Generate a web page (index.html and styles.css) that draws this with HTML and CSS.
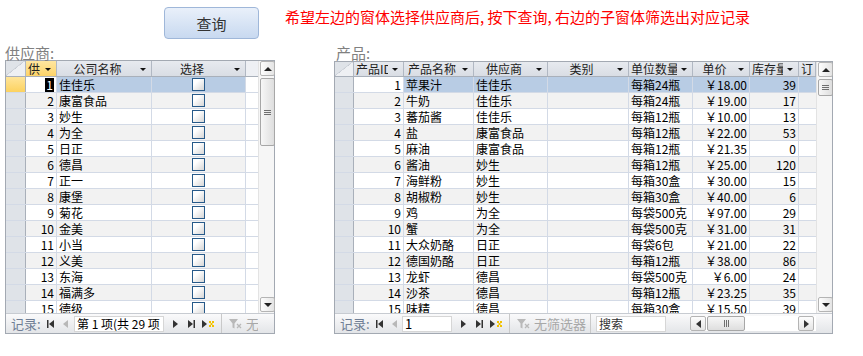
FILE: index.html
```html
<!DOCTYPE html>
<html lang="zh-CN">
<head>
  <meta charset="UTF-8" />
  <title>供应商与产品</title>
  <link rel="stylesheet" href="styles.css">
</head>
<body>
  <div class="top">
    <button class="query-btn">查询</button>
    <div class="hint">希望左边的窗体选择供应商后, 按下查询, 右边的子窗体筛选出对应记录</div>
  </div>

  <div class="panels">
    <!-- 供应商 -->
    <div class="panel panel-left">
      <div class="caption">供应商:</div>
      <div class="grid">
        <div class="grid-main">
          <div class="sheet" id="supplierSheet">
            <div class="row head">
              <div class="cell selector corner"></div>
              <div class="cell hcell active"><span class="hlabel start">供</span><i class="drop"></i></div>
              <div class="cell hcell"><span class="hlabel">公司名称</span><i class="drop"></i></div>
              <div class="cell hcell"><span class="hlabel">选择</span><i class="drop"></i></div>
              <div class="cell hcell blank"></div>
            </div>
          </div>
          <div class="vscroll">
            <div class="sbtn"><i class="tri-up"></i></div>
            <div class="thumb tall"><i class="grip"></i></div>
            <div class="track"></div>
            <div class="sbtn down"><i class="tri-down"></i></div>
          </div>
        </div>
        <div class="nav">
          <div class="nav-items">
            <span class="nav-label">记录:</span>
            <svg class="nv first" width="7" height="8"><rect width="1.5" height="8"/><path d="M7 0L2 4L7 8Z"/></svg>
            <svg class="nv prev off" width="5" height="8"><path d="M5 0L0 4L5 8Z"/></svg>
            <div class="nav-box wide">第 1 项(共 29 项</div>
            <svg class="nv next" width="5" height="8"><path d="M0 0L5 4L0 8Z"/></svg>
            <svg class="nv last" width="7" height="8"><path d="M0 0L5 4L0 8Z"/><rect x="5.5" width="1.5" height="8"/></svg>
            <svg class="nv new" width="12" height="8"><path d="M0 0L5 4L0 8Z"/><g fill="#f2c200"><rect x="7" y="1" width="2" height="2"/><rect x="10" y="1" width="2" height="2"/><rect x="7" y="5" width="2" height="2"/><rect x="10" y="5" width="2" height="2"/><rect x="8.5" y="3" width="2" height="2"/></g></svg>
            <span class="nav-sep"></span>
            <svg class="funnel" width="13" height="12"><path d="M0 1h9L5.5 5.5v5l-2-1v-4Z" fill="#b9b9b9"/><path d="M8 6l4 4M12 6l-4 4" stroke="#b9b9b9" stroke-width="1.3"/></svg>
            <span class="nav-off">无筛选器</span>
          </div>
        </div>
      </div>
    </div>

    <!-- 产品 -->
    <div class="panel panel-right">
      <div class="caption">产品:</div>
      <div class="grid">
        <div class="grid-main">
          <div class="sheet" id="productSheet">
            <div class="row head">
              <div class="cell selector corner"></div>
              <div class="cell hcell"><span class="hlabel">产品ID</span><i class="drop"></i></div>
              <div class="cell hcell"><span class="hlabel">产品名称</span><i class="drop"></i></div>
              <div class="cell hcell"><span class="hlabel">供应商</span><i class="drop"></i></div>
              <div class="cell hcell"><span class="hlabel">类别</span><i class="drop"></i></div>
              <div class="cell hcell"><span class="hlabel">单位数量</span><i class="drop"></i></div>
              <div class="cell hcell"><span class="hlabel">单价</span><i class="drop"></i></div>
              <div class="cell hcell"><span class="hlabel">库存量</span><i class="drop"></i></div>
              <div class="cell hcell"><span class="hlabel">订购量</span></div>
            </div>
          </div>
          <div class="vscroll">
            <div class="sbtn"><i class="tri-up"></i></div>
            <div class="thumb short"><i class="grip"></i></div>
            <div class="track"></div>
            <div class="sbtn down"><i class="tri-down"></i></div>
          </div>
        </div>
        <div class="nav">
          <div class="nav-items right">
            <span class="nav-label">记录:</span>
            <svg class="nv first" width="7" height="8"><rect width="1.5" height="8"/><path d="M7 0L2 4L7 8Z"/></svg>
            <svg class="nv prev off" width="5" height="8"><path d="M5 0L0 4L5 8Z"/></svg>
            <div class="nav-box small">1</div>
            <svg class="nv next" width="5" height="8"><path d="M0 0L5 4L0 8Z"/></svg>
            <svg class="nv last" width="7" height="8"><path d="M0 0L5 4L0 8Z"/><rect x="5.5" width="1.5" height="8"/></svg>
            <svg class="nv new" width="12" height="8"><path d="M0 0L5 4L0 8Z"/><g fill="#f2c200"><rect x="7" y="1" width="2" height="2"/><rect x="10" y="1" width="2" height="2"/><rect x="7" y="5" width="2" height="2"/><rect x="10" y="5" width="2" height="2"/><rect x="8.5" y="3" width="2" height="2"/></g></svg>
            <span class="nav-sep"></span>
            <svg class="funnel" width="13" height="12"><path d="M0 1h9L5.5 5.5v5l-2-1v-4Z" fill="#b9b9b9"/><path d="M8 6l4 4M12 6l-4 4" stroke="#b9b9b9" stroke-width="1.3"/></svg>
            <span class="nav-off">无筛选器</span>
            <span class="nav-sep sep2"></span>
            <div class="nav-box search">搜索</div>
            <div class="hscroll">
              <div class="hbtn"><svg width="5" height="8"><path d="M5 0L0 4L5 8Z"/></svg></div>
              <div class="hthumb"><i class="vgrip"></i></div>
              <div class="htrack"></div>
              <div class="hbtn"><svg width="5" height="8"><path d="M0 0L5 4L0 8Z"/></svg></div>
            </div>
          </div>
        </div>
      </div>
    </div>
  </div>

  <script>
    const suppliers = ["佳佳乐", "康富食品", "妙生", "为全", "日正", "德昌", "正一", "康堡",
      "菊花", "金美", "小当", "义美", "东海", "福满多", "德级"];

    const products = [
      ["苹果汁", "佳佳乐", "每箱24瓶", "18.00", 39],
      ["牛奶", "佳佳乐", "每箱24瓶", "19.00", 17],
      ["蕃茄酱", "佳佳乐", "每箱12瓶", "10.00", 13],
      ["盐", "康富食品", "每箱12瓶", "22.00", 53],
      ["麻油", "康富食品", "每箱12瓶", "21.35", 0],
      ["酱油", "妙生", "每箱12瓶", "25.00", 120],
      ["海鲜粉", "妙生", "每箱30盒", "30.00", 15],
      ["胡椒粉", "妙生", "每箱30盒", "40.00", 6],
      ["鸡", "为全", "每袋500克", "97.00", 29],
      ["蟹", "为全", "每袋500克", "31.00", 31],
      ["大众奶酪", "日正", "每袋6包", "21.00", 22],
      ["德国奶酪", "日正", "每箱12瓶", "38.00", 86],
      ["龙虾", "德昌", "每袋500克", "6.00", 24],
      ["沙茶", "德昌", "每箱12瓶", "23.25", 35],
      ["味精", "德昌", "每箱30盒", "15.50", 39]
    ];

    const supplierSheet = document.getElementById("supplierSheet");
    suppliers.forEach((name, i) => {
      const row = document.createElement("div");
      row.className = "row" + (i % 2 ? " alt" : "") + (i === 0 ? " sel" : "");
      row.innerHTML = `
        <div class="cell selector${i === 0 ? ' mark' : ''}"></div>
        <div class="cell num${i === 0 ? ' current' : ''}">${i === 0 ? '<span class="caret">1</span>' : i + 1}</div>
        <div class="cell">${name}</div>
        <div class="cell center"><span class="check"></span></div>
        <div class="cell blank"></div>`;
      supplierSheet.appendChild(row);
    });

    const productSheet = document.getElementById("productSheet");
    products.forEach((p, i) => {
      const row = document.createElement("div");
      row.className = "row" + (i % 2 ? " alt" : "") + (i === 0 ? " sel" : "");
      row.innerHTML = `
        <div class="cell selector"></div>
        <div class="cell num${i === 0 ? ' current' : ''}">${i + 1}</div>
        <div class="cell">${p[0]}</div>
        <div class="cell">${p[1]}</div>
        <div class="cell"></div>
        <div class="cell">${p[2]}</div>
        <div class="cell num">￥${p[3]}</div>
        <div class="cell num">${p[4]}</div>
        <div class="cell"></div>`;
      productSheet.appendChild(row);
    });
  </script>
</body>
</html>
```

FILE: styles.css
```css
* {
  box-sizing: border-box;
}

body {
  margin: 0;
  width: 863px;
  height: 356px;
  overflow: hidden;
  background: #ffffff;
  font-family: "Noto Sans CJK SC", sans-serif;
  color: #000;
}

/* top bar */
.top {
  display: flex;
  align-items: flex-start;
  height: 45px;
}

.query-btn {
  margin: 7px 0 0 164px;
  width: 95px;
  height: 32px;
  border: 1px solid #9fb7d9;
  border-radius: 4px;
  background: linear-gradient(#e9f0fa, #c8d9f0);
  font-family: inherit;
  font-size: 15px;
  color: #333;
  padding: 0;
}

.hint {
  margin: 9px 0 0 26px;
  color: #ff0000;
  font-size: 15px;
  line-height: 16px;
  white-space: nowrap;
}

/* panels */
.panels {
  display: flex;
  align-items: flex-start;
}

.panel-left {
  margin-left: 5px;
  width: 270px;
}

.panel-right {
  margin-left: 59px;
  width: 499px;
}

.caption {
  height: 15px;
  font-size: 15px;
  line-height: 15px;
  color: #808080;
}

.panel-right .caption {
  padding-left: 2px;
}

.grid {
  border: 1px solid #a3a9b2;
  background: #fff;
  display: flex;
  flex-direction: column;
}

.panel-left .grid {
  height: 274px;
}

.panel-right .grid {
  height: 273px;
  margin-top: 1px;
}

.grid-main {
  flex: 1;
  display: flex;
  min-height: 0;
}

.sheet {
  flex: 1;
  overflow: hidden;
}

/* rows and cells */
.row {
  display: grid;
  height: 16px;
  border-bottom: 1px solid #d3dae6;
}

.panel-left .row {
  grid-template-columns: 20px 31px 95px 94px 12px;
}

.panel-right .row {
  grid-template-columns: 19px 50px 70px 74px 81px 64px 57px 49px 17px;
}

.panel-right .row.head {
  height: 15px;
}

.cell {
  border-right: 1px solid #d3dae6;
  padding: 0 2px;
  font-size: 12px;
  line-height: 15px;
  white-space: nowrap;
  overflow: hidden;
  background: #fff;
}

.cell:last-child {
  border-right: none;
}

.row.alt .cell {
  background: #f2f2f2;
}

.row.sel .cell {
  background: #b8cce4;
}

.row .cell.current,
.row .cell.blank {
  background: #fff;
}

.cell.num {
  text-align: right;
}

.cell.center {
  text-align: center;
}

.row .cell.selector {
  background: #dfe3e8;
  border-right: 1px solid #a9b0ba;
}

.row .cell.selector.mark {
  background: linear-gradient(#ffe59a, #fcd25f);
}

.caret {
  display: inline-block;
  background: #000;
  color: #fff;
  line-height: 14px;
  padding: 0 1px;
}

.check {
  display: inline-block;
  width: 13px;
  height: 13px;
  margin-top: 1px;
  vertical-align: top;
  border: 1px solid #275a8a;
  background: linear-gradient(135deg, #ffffff 30%, #d6d6d6);
}

/* header */
.row.head {
  border-bottom: 1px solid #a9b0ba;
}

.row.head .cell {
  background: linear-gradient(#e7eaef, #d9dde4);
  border-right: 1px solid #b1b8c3;
}

.hcell {
  display: flex;
  align-items: center;
  color: #222;
}

.row.head .cell.active {
  background: linear-gradient(#ffe6a0, #fdd469);
}

.row.head .cell.blank {
  background: #eef0f4;
  border-right: none;
}

.row.head .cell.corner {
  background:
    linear-gradient(to top left, #eef0f3 49%, #c5cad2 50%, transparent 55%),
    #dfe3e8;
}

.panel-right .row.head .cell {
  line-height: 14px;
}

.hlabel {
  flex: 1;
  overflow: hidden;
  text-align: center;
  white-space: nowrap;
}

.hlabel.start {
  text-align: left;
}

.drop {
  width: 0;
  height: 0;
  margin: 1px 3px 0 4px;
  border-left: 3px solid transparent;
  border-right: 3px solid transparent;
  border-top: 3px solid #111;
}

/* vertical scrollbar */
.vscroll {
  width: 16px;
  display: flex;
  flex-direction: column;
  padding-left: 1px;
  background: #f6f6f6;
  border-left: 1px solid #e3e3e3;
}

.sbtn {
  width: 15px;
  height: 15px;
  border: 1px solid #b4b4b4;
  border-radius: 2px;
  background: linear-gradient(90deg, #fdfdfd, #e4e4e4);
  display: flex;
  align-items: center;
  justify-content: center;
}

.sbtn.down {
  margin-bottom: 1px;
}

.tri-up {
  border-left: 4px solid transparent;
  border-right: 4px solid transparent;
  border-bottom: 4px solid #222;
}

.tri-down {
  border-left: 4px solid transparent;
  border-right: 4px solid transparent;
  border-top: 4px solid #222;
}

.thumb {
  width: 15px;
  margin-top: 2px;
  border: 1px solid #a7a7a7;
  border-radius: 2px;
  background: linear-gradient(90deg, #f7f7f7, #dedede);
  display: flex;
  align-items: center;
  justify-content: center;
}

.thumb.tall {
  height: 68px;
}

.thumb.short {
  height: 17px;
}

.grip {
  width: 7px;
  height: 5px;
  border-top: 1px solid #6f6f6f;
  border-bottom: 1px solid #6f6f6f;
  background: linear-gradient(transparent 1px, #6f6f6f 1px, #6f6f6f 2px, transparent 2px);
}

.track {
  flex: 1;
}

/* record navigation bar */
.nav {
  height: 20px;
  border-top: 1px solid #c7cbd1;
  background: linear-gradient(#fafafb, #e3e5e8);
  display: flex;
}

.nav-items {
  width: 252px;
  height: 100%;
  display: flex;
  align-items: center;
  overflow: hidden;
  white-space: nowrap;
}

.nav-items.right {
  width: 481px;
}

.nav-label {
  width: 31px;
  margin-left: 5px;
  font-size: 13px;
  color: #6f7e95;
  flex-shrink: 0;
}

.nv {
  flex-shrink: 0;
  fill: #333;
}

.nv.off {
  fill: #b8b8b8;
}

.first {
  margin-left: 5px;
}

.prev {
  margin-left: 9px;
}

.next {
  margin-left: 9px;
}

.last {
  margin-left: 10px;
}

.new {
  margin-left: 7px;
}

.nav-box {
  flex-shrink: 0;
  height: 16px;
  margin-left: 6px;
  padding-left: 2px;
  border: 1px solid #d6d6d6;
  background: #fff;
  font-size: 12px;
  line-height: 14px;
  overflow: hidden;
}

.nav-box.wide {
  width: 90px;
}

.nav-box.small {
  width: 50px;
  margin-left: 5px;
  font-size: 13px;
}

.nav-box.search {
  width: 70px;
  margin-left: 5px;
  font-size: 12px;
  color: #333;
}

.nav-sep {
  flex-shrink: 0;
  width: 1px;
  height: 20px;
  margin-left: 7px;
  background: #c9c9c9;
}

.nav-sep.sep2 {
  margin-left: 4px;
}

.funnel {
  flex-shrink: 0;
  margin-left: 7px;
}

.nav-off {
  margin-left: 4px;
  font-size: 13px;
  color: #a8a8a8;
}

/* horizontal scrollbar */
.hscroll {
  flex: 1;
  height: 15px;
  margin-left: 24px;
  display: flex;
  background: #fff;
}

.hbtn {
  width: 16px;
  height: 15px;
  border: 1px solid #b4b4b4;
  border-radius: 2px;
  background: linear-gradient(#fdfdfd, #e4e4e4);
  display: flex;
  align-items: center;
  justify-content: center;
  fill: #333;
}

.hbtn:last-child {
  margin-right: 2px;
}

.hthumb {
  width: 38px;
  margin-left: 1px;
  border: 1px solid #a7a7a7;
  border-radius: 2px;
  background: linear-gradient(#f7f7f7, #dedede);
  display: flex;
  align-items: center;
  justify-content: center;
}

.vgrip {
  width: 5px;
  height: 7px;
  border-left: 1px solid #6f6f6f;
  border-right: 1px solid #6f6f6f;
  background: linear-gradient(90deg, transparent 1px, #6f6f6f 1px, #6f6f6f 2px, transparent 2px);
}

.htrack {
  flex: 1;
}
```
